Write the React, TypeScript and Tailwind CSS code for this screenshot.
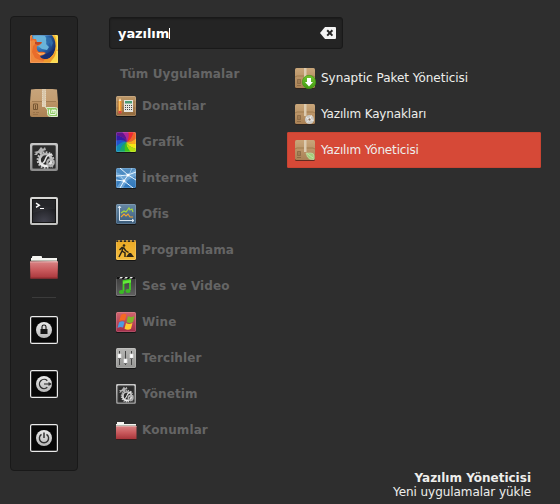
import type { ReactNode } from "react";

function Firefox() {
  return (
    <svg width="28" height="28" viewBox="0 0 28 28">
      <defs>
        <clipPath id="ffc"><rect width="28" height="28" rx="1.5" /></clipPath>
        <linearGradient id="ffo" x1="0" y1="0" x2="1" y2="1"><stop offset="0" stopColor="#ee8a34" /><stop offset=".45" stopColor="#e4632a" /><stop offset="1" stopColor="#f39a2c" /></linearGradient>
        <radialGradient id="ffb" cx=".3" cy=".25" r=".8"><stop offset="0" stopColor="#6fbfe2" /><stop offset=".5" stopColor="#2b6aae" /><stop offset="1" stopColor="#16235f" /></radialGradient>
      </defs>
      <g clipPath="url(#ffc)">
        <rect width="28" height="28" fill="url(#ffo)" />
        <path d="M22 0h6v28h-8z" fill="#f6b42c" />
        <path d="M25 0q3 8 1 19l2 3V0z" fill="#fae04c" />
        <path d="M2 0h20q5 7 3 15-3 9-10 9-8 0-10-8z" fill="url(#ffb)" />
        <path d="M3 1h12l2 4-1 4 3 3-2 3-5-1-8-6z" fill="#69b3d9" />
        <path d="M17 2l4 1 2 5-2 4-1-4-3 1-1-4z" fill="#2e6caa" />
        <path d="M14 20l6-3 4-3q0 8-8 10l-5-2z" fill="#182d70" />
        <path d="M0 1l2 3h4l1 3 5 0-2 3-3 1q-1 4 2 6 4-1 7 1l-3 2-3 1q1 3 6 4l-2 3H0z" fill="#e96c2b" />
        <path d="M0 6l4-1 2 3-3 3-1 6 3 6q5 3 11 3v2H0z" fill="#ef883c" />
        <path d="M6 17q4 2 8 1l1 1-5 1z" fill="#f8b568" />
        <path d="M5 7h6l1 1-4 2-3-1z" fill="#bc4727" />
        <path d="M14 25q7-1 11-8l3-3v14H13z" fill="#ef9a2c" />
        <path d="M22 25q4-4 4-9h2v12h-8z" fill="#fbd94c" />
      </g>
      <rect x=".5" y=".5" width="27" height="27" rx="1.5" fill="none" stroke="#fff" strokeOpacity=".15" />
    </svg>
  );
}

function MintPackage() {
  return (
    <svg width="28" height="29" viewBox="0 0 28 29">
      <defs>
        <linearGradient id="mpt" x1="0" y1="0" x2="0" y2="1"><stop offset="0" stopColor="#c7a47b" /><stop offset="1" stopColor="#c39d70" /></linearGradient>
        <linearGradient id="mpb" x1="0" y1="0" x2="0" y2="1"><stop offset="0" stopColor="#bd9466" /><stop offset="1" stopColor="#aa8154" /></linearGradient>
      </defs>
      <path d="M1 .5Q14-1.2 27 .5L28 13H0z" fill="url(#mpt)" />
      <path d="M0 12.5h28V26q0 2-2 2H2q-2 0-2-2z" fill="url(#mpb)" />
      <path d="M2 12.5h24" stroke="#a17c52" />
      <path d="M12 0h4v18h-4z" fill="#dfcfb5" />
      <path d="M12 0h4v12h-4z" fill="#d9c6a9" />
      <path d="M12.5 2v15m3-15v15" stroke="#efe4d2" strokeWidth=".5" strokeDasharray="1 1" />
      <path d="M3.5 15h4v5.5h-4zM5.5 16v4" stroke="#765632" fill="none" />
      <path d="M3 23.5h2m1 0h3m-6 2h5" stroke="#957046" fill="none" strokeWidth=".8" />
      <path d="M16.5 18.5h9q2 0 2 2v7h-7q-3 0-3-3v-3q0-2-2-3z" fill="#8fcb65" stroke="#dfebcd" />
      <path d="M19.5 20.5v3.5q0 1.5 1.5 1.5h3.5q1.5 0 1.5-1.5v-2q0-1-1-1t-1.1 1v2m0-2q0-1-1-1t-1.1 1v2" fill="none" stroke="#f4faef" strokeWidth="1.1" />
    </svg>
  );
}

function Gears({ size, id }: { size: number; id: string }) {
  return (
    <svg width={size} height={size} viewBox="0 0 28 28">
      <defs>
        <linearGradient id={id + "f"} x1="0" y1="0" x2="0" y2="1"><stop offset="0" stopColor="#c9c9c9" /><stop offset="1" stopColor="#8b8b8b" /></linearGradient>
        <linearGradient id={id + "g"} x1="0" y1="0" x2="0" y2="1"><stop offset="0" stopColor="#b5b5b5" /><stop offset="1" stopColor="#f0f0f0" /></linearGradient>
      </defs>
      <rect width="28" height="28" rx="2" fill={`url(#${id}f)`} />
      <rect x="2.5" y="2.5" width="23" height="23" rx="1" fill="#2c2c2c" stroke="#555" />
      <path d="M4 12l2-2-2-1 4-1 3-4 2 2 2-2 1 3-3 1-1 3-4-1-1 2z" fill="#b2b2b2" />
      <circle cx="15.5" cy="17" r="7.9" fill="none" stroke="#c5c5c5" strokeWidth="1.9" strokeDasharray="1.7 1.4" />
      <circle cx="15.5" cy="17" r="6" fill="none" stroke={`url(#${id}g)`} strokeWidth="2.7" />
      <path d="M16 15q-1 4-4 6m4-6q1-3 6-4" stroke="#e5e5e5" strokeWidth="1.5" fill="none" />
      <circle cx="20.5" cy="19.5" r="3.2" fill="none" stroke="#b5b5b5" strokeWidth="2.2" />
      <path d="M17 21l6 3" stroke="#aaa" strokeWidth="1.5" />
    </svg>
  );
}

function Terminal() {
  return (
    <svg width="28" height="28" viewBox="0 0 28 28">
      <defs>
        <linearGradient id="tmf" x1="0" y1="0" x2="0" y2="1"><stop offset="0" stopColor="#d8d8d6" /><stop offset="1" stopColor="#c1c1bf" /></linearGradient>
        <radialGradient id="tmb" cx=".5" cy="1" r=".75"><stop offset="0" stopColor="#454551" /><stop offset="1" stopColor="#1d1e21" /></radialGradient>
      </defs>
      <rect width="28" height="28" rx="2" fill="url(#tmf)" />
      <rect x="2.5" y="2.5" width="23" height="23" fill="url(#tmb)" stroke="#161616" />
      <path d="M3 3h22v9q-10 0-22 4z" fill="#fff" opacity=".04" />
      <path d="M6 6.2l3.3 2L6 10.3" stroke="#fff" strokeWidth="1.4" fill="none" />
      <path d="M10 11.5h4" stroke="#fff" />
    </svg>
  );
}

function Folder() {
  return (
    <svg width="28" height="28" viewBox="0 0 28 28">
      <defs><linearGradient id="fold" x1="0" y1="0" x2="0" y2="1"><stop offset="0" stopColor="#d98484" /><stop offset=".5" stopColor="#c95a5d" /><stop offset="1" stopColor="#a8363b" /></linearGradient></defs>
      <path d="M1 10V7h1V6q0-1 1-1h8q1 0 1 1v1h15v4z" fill="#f5f5f1" />
      <path d="M1 9.5h26" stroke="#b9b9af" />
      <path d="M0 10.5h28l-.4 17H.4z" fill="url(#fold)" />
      <path d="M0 11h28" stroke="#e3a6a6" />
      <path d="M.5 27h27" stroke="#8e2d31" />
    </svg>
  );
}

function SmallFolder() {
  return (
    <svg width="21" height="20" viewBox="0 0 21 20" className="-mr-px shrink-0">
      <defs><linearGradient id="sfold" x1="0" y1="0" x2="0" y2="1"><stop offset="0" stopColor="#d98484" /><stop offset=".5" stopColor="#c95a5d" /><stop offset="1" stopColor="#a8363b" /></linearGradient></defs>
      <path d="M0 6V4h1V2h7v2h12v2z" fill="#f5f5f1" />
      <path d="M0 5.5h20" stroke="#b9b9af" />
      <path d="M0 6h20.5v13H0z" fill="url(#sfold)" />
      <path d="M0 6.5h20.5" stroke="#dfa0a0" />
      <path d="M0 19.5h20.5" stroke="#3a1c1d" />
    </svg>
  );
}

function Session({ kind }: { kind: "lock" | "logout" | "power" }) {
  const id = "ses-" + kind;
  return (
    <svg width="28" height="28" viewBox="0 0 28 28">
      <defs><linearGradient id={id} x1="0" y1="0" x2="0" y2="1"><stop offset="0" stopColor="#eaeaea" /><stop offset="1" stopColor="#b8b8b8" /></linearGradient></defs>
      <rect x=".6" y=".6" width="26.8" height="26.8" rx="1.5" fill="#080808" stroke="#eaeaea" strokeWidth="1.2" />
      <circle cx="14" cy="14" r="8" fill={`url(#${id})`} />
      {kind === "lock" && <><path d="M12 13v-2.2q0-1.8 2-1.8t2 1.8V13" fill="none" stroke="#151515" strokeWidth="1.1" /><path d="M10.5 13h7v5h-7z" fill="#151515" /></>}
      {kind === "logout" && <><path d="M17.3 17.3A4.6 4.6 0 1 1 17.3 10.7" fill="none" stroke="#303030" strokeWidth="1.4" /><path d="M14 14h5" stroke="#303030" strokeWidth="1.1" /><path d="M18.5 12l3.5 2-3.5 2z" fill="#303030" /></>}
      {kind === "power" && <><path d="M11.5 10.3a4.6 4.6 0 1 0 5 0" fill="none" stroke="#303030" strokeWidth="1.4" /><path d="M14 8.5V14" stroke="#303030" strokeWidth="1.5" /></>}
    </svg>
  );
}

function Tile({ id, from, to, children }: { id: string; from: string; to: string; children: ReactNode }) {
  return (
    <svg width="20" height="21" viewBox="0 0 20 21" className="mt-px shrink-0">
      <defs>
        <linearGradient id={id} x1="0" y1="0" x2="0" y2="1"><stop offset="0" stopColor={from} /><stop offset="1" stopColor={to} /></linearGradient>
        <clipPath id={id + "c"}><rect width="20" height="20" rx="1.5" /></clipPath>
      </defs>
      <rect y="1" width="20" height="20" rx="1.5" fill="#151515" />
      <g clipPath={`url(#${id}c)`}><rect width="20" height="20" fill={`url(#${id})`} />{children}</g>
      <rect x=".5" y=".5" width="19" height="19" rx="1.2" fill="none" stroke="#fff" strokeOpacity=".15" />
    </svg>
  );
}

const Accessories = () => (
  <Tile id="acc" from="#bd9869" to="#946b3d">
    <path d="M0 6h20M0 12h20M0 17h20" stroke="#7f5930" strokeOpacity=".35" />
    <path d="M2.5 5L4 2l1.5 3v12h-3z" fill="#f2982e" /><path d="M3.5 5v10" stroke="#ffc35e" />
    <path d="M2.5 15h3v2.5h-3z" fill="#d94844" /><path d="M2.7 5L4 2l1.3 3z" fill="#f3dfc1" />
    <path d="M8 4h9v12H8z" fill="#e6e5de" /><path d="M9 5h7v2.5H9z" fill="#4c9b74" />
    <path d="M9 9.5h7M9 11.5h7M9 13.5h7" stroke="#44494c" strokeDasharray="1 1" />
  </Tile>
);

const wheelColors = ["#f02930", "#f26427", "#fba71c", "#f4e512", "#b4df0c", "#3dc51b", "#16a56c", "#108ab7", "#2150ce", "#351aa5", "#61148f", "#ad249b"];
const Graphics = () => (
  <Tile id="gfx" from="#8c2f9f" to="#2ab344">
    <g transform="translate(10.5 10)">
      {wheelColors.map((color, i) => <path key={color} d="M0 0Q4-4 0-16L8-13.86Q5.46-1.46 0 0z" transform={`rotate(${i * 30})`} fill={color} />)}
    </g>
  </Tile>
);

const Internet = () => (
  <Tile id="net" from="#5792c4" to="#2f77bc">
    <path d="M0 4l9 4 11-7v7l-8 4-5 8H0l6-8-6-4z" fill="#8fc0e6" opacity=".55" />
    <path d="M0 8l12-1 8-3M4 0l8 7 8 5M12 7L8 13 4 20M0 12l8 1 9 7" fill="none" stroke="#e5f4ff" />
    <path d="M8 13L4 7M13 7l3-7" stroke="#b9dbf3" strokeWidth=".7" />
    <circle cx="12" cy="7" r="1.5" fill="#fff" /><circle cx="8" cy="13" r="1.4" fill="#fff" />
  </Tile>
);

const Office = () => (
  <Tile id="off" from="#6688a4" to="#3b5c7b">
    <path d="M3.5 2v14.5H18M2 4l1.5-2L5 4M16 15l2 1.5-2 1.5" stroke="#dce8f2" fill="none" />
    <path d="M5 9l3-2 2 1 3-4 1 2 2-1 1 3" stroke="#a8d93d" strokeWidth="1.2" fill="none" />
    <path d="M5 13l3-3 2 2 2-2 2 3 3 0" stroke="#f2a22d" strokeWidth="1.1" fill="none" />
  </Tile>
);

const Programming = () => (
  <Tile id="prg" from="#eaa824" to="#f5bd3d">
    <path d="M0 0h20v2H0z" fill="#b98626" /><path d="M0 1h20" stroke="#30281b" strokeWidth="2" strokeDasharray="2 2" />
    <circle cx="8" cy="5.5" r="1.3" fill="#2d2618" /><path d="M6.5 7l-3 3M7 7l-1 4-3 6M6 11l3 2v4M7.5 7.5l2 3 3 2" stroke="#2d2618" strokeWidth="1.5" fill="none" />
    <path d="M10 17l3-4h2l3 4z" fill="#2d2618" />
  </Tile>
);

const Media = () => (
  <Tile id="med" from="#393939" to="#616161">
    <path d="M0 0h20v3H0z" fill="#111" /><path d="M3 2.5L4.5 1H7L5.5 2.5zM8 2.5L9.5 1H12l-1.5 1.5zM13 2.5L14.5 1H17l-1.5 1.5z" fill="#f3f3f3" />
    <path d="M7.5 15V5L14 4v10" fill="none" stroke="#42cf22" strokeWidth="1.8" /><path d="M7 5.5L15 4v2.5L7 8z" fill="#65e93c" />
    <ellipse cx="5.5" cy="16" rx="2.6" ry="2" fill="#3aba24" /><ellipse cx="12" cy="15" rx="2.6" ry="2" fill="#3aba24" />
  </Tile>
);

const Wine = () => (
  <Tile id="wine" from="#d1656f" to="#a12d49">
    <path d="M5 3q3-2 5.5-.5L9 8.5q-3-1-6 1z" fill="#f46923" /><path d="M12 4q3 2 6.5 0L17 10q-3 2-6.5 0z" fill="#80b82b" />
    <path d="M3 10.5q3-2 5.5-.5L7 15.5q-3-1-5.5.5z" fill="#4d9ce0" /><path d="M10 11q3 2 6.5 0L15 16.8q-3 2-6.5 0z" fill="#ffc92e" />
  </Tile>
);

const Preferences = () => (
  <Tile id="pref" from="#b5b5b3" to="#969694">
    <path d="M3.5 3v14M9.5 3v14M15.5 3v14" stroke="#464646" />
    <path d="M2 6h3v4H2zM8 11h3v4H8zM14 6h3v4h-3z" fill="#fff" stroke="#e1e1e1" strokeWidth=".7" />
    <path d="M2 10.5h3M8 15.5h3M14 10.5h3" stroke="#777" />
  </Tile>
);

function Package({ kind }: { kind: "download" | "disc" | "leaf" }) {
  const id = "pkg-" + kind;
  return (
    <svg width="21" height="21" viewBox="0 0 21 21" className="mt-px -mr-px shrink-0">
      <defs>
        <linearGradient id={id} x1="0" y1="0" x2="0" y2="1"><stop offset="0" stopColor="#c9a67a" /><stop offset="1" stopColor="#a98155" /></linearGradient>
        <linearGradient id={id + "e"} x1="0" y1="0" x2="0" y2="1"><stop offset="0" stopColor="#70c52e" /><stop offset="1" stopColor="#429a13" /></linearGradient>
      </defs>
      <rect y="1" width="20" height="20" rx="1.5" fill="#302117" opacity=".7" />
      <rect width="20" height="20" rx="1.5" fill={`url(#${id})`} />
      <path d="M0 9l2-1h16l2 1" stroke="#9d784d" strokeWidth=".9" fill="none" />
      <path d="M9 0h2.5v12H9z" fill="#dccbb0" />
      <path d="M2.5 11.5h3v4h-3zM4 12v3M2 17.5h4" stroke="#80603d" strokeWidth=".7" fill="none" />
      {kind === "download" && <><circle cx="14" cy="14" r="6.7" fill={`url(#${id}e)`} stroke="#3d9511" strokeWidth=".6" /><path d="M12 10h4v4h2l-4 4.5-4-4.5h2z" fill="#fff" /></>}
      {kind === "disc" && <><circle cx="14.5" cy="15.5" r="4.5" fill="#cbc9c4" /><path d="M11 13.5l3.5 2 2-4M12 18.5l2.5-3 4 1" stroke="#efefeb" fill="none" /><circle cx="14.5" cy="15.5" r="1.5" fill="#8d725c" stroke="#eee" strokeWidth=".8" /></>}
      {kind === "leaf" && <><path d="M11 13h5q3 0 3 3v3.5q-5 .5-6.5-2.5z" fill="#a3ce7c" stroke="#cbe1ac" strokeWidth=".6" /><path d="M12 13.5l6 4.5" stroke="#d2e8b6" strokeWidth=".7" /></>}
    </svg>
  );
}

const categories = [
  { name: "Donatılar", icon: <Accessories /> },
  { name: "Grafik", icon: <Graphics /> },
  { name: "İnternet", icon: <Internet /> },
  { name: "Ofis", icon: <Office /> },
  { name: "Programlama", icon: <Programming /> },
  { name: "Ses ve Video", icon: <Media /> },
  { name: "Wine", icon: <Wine /> },
  { name: "Tercihler", icon: <Preferences /> },
  { name: "Yönetim", icon: <Gears size={20} id="adm" /> },
  { name: "Konumlar", icon: <SmallFolder /> },
];

export default function App() {
  return (
    <div className="flex h-[504px] w-[560px] overflow-hidden bg-[#2e2e2e] pt-4 pl-2.5 font-['DejaVu_Sans',sans-serif] text-xs text-[#eeeeec]">
      <aside className="flex h-[455px] w-[68px] shrink-0 flex-col items-center rounded-sm border border-[#191919] bg-[#242424] pt-[18px]">
        <div className="flex flex-col gap-[26px]">
          <div className="h-7"><Firefox /></div>
          <div className="h-7"><MintPackage /></div>
          <div className="h-7"><Gears size={28} id="set" /></div>
          <div className="h-7"><Terminal /></div>
          <div className="h-7"><Folder /></div>
        </div>
        <div className="mt-[18px] mb-[18px] h-px w-6 bg-[#3b3b3b]" />
        <div className="flex flex-col gap-[26px]">
          <Session kind="lock" />
          <Session kind="logout" />
          <Session kind="power" />
        </div>
      </aside>
      <main className="ml-[31px] flex w-[432px] flex-col">
        <div className="mt-px flex h-8 w-[234px] items-center rounded-[3px] border border-[#191919] bg-[#242424] pr-1.5 pl-2 shadow-[inset_0_1px_2px_#1b1b1b]">
          <span className="pt-px text-[13px] font-bold tracking-[-0.08px] text-white">yazılım</span>
          <span className="h-[11px] w-px bg-white" />
          <svg width="16" height="12" viewBox="0 0 16 12" className="ml-auto">
            <path d="M5 0h10q1 0 1 1v10q0 1-1 1H5L0 6z" fill="#f3f3f3" />
            <path d="M7.2 3.2l5.2 5.4m0-5.4L7.2 8.6" stroke="#252525" strokeWidth="2" />
          </svg>
        </div>
        <div className="mt-[11px] flex">
          <nav className="w-[178px] font-bold tracking-[0.1px] text-[#656565]">
            <div className="flex h-7 items-center pl-[11px]">Tüm Uygulamalar</div>
            {categories.map(({ name, icon }) => (
              <div key={name} className="flex h-9 items-center gap-1.5 pl-[7px]">{icon}<span>{name}</span></div>
            ))}
          </nav>
          <section className="w-[254px]">
            <div className="flex h-9 items-center gap-1.5 pl-2"><Package kind="download" /><span className="tracking-[-0.03px]">Synaptic Paket Yöneticisi</span></div>
            <div className="flex h-9 items-center gap-1.5 pl-2"><Package kind="disc" /><span className="tracking-[-0.15px]">Yazılım Kaynakları</span></div>
            <div className="flex h-9 items-center gap-1.5 rounded-[1px] border border-[#c94432] bg-[#d64937] pl-[7px]"><Package kind="leaf" /><span className="tracking-[-0.15px]">Yazılım Yöneticisi</span></div>
          </section>
        </div>
        <footer className="mt-[23px] mr-2.5 text-right leading-[14px]">
          <div className="font-bold">Yazılım Yöneticisi</div>
          <div className="tracking-[-0.06px]">Yeni uygulamalar yükle</div>
        </footer>
      </main>
    </div>
  );
}
